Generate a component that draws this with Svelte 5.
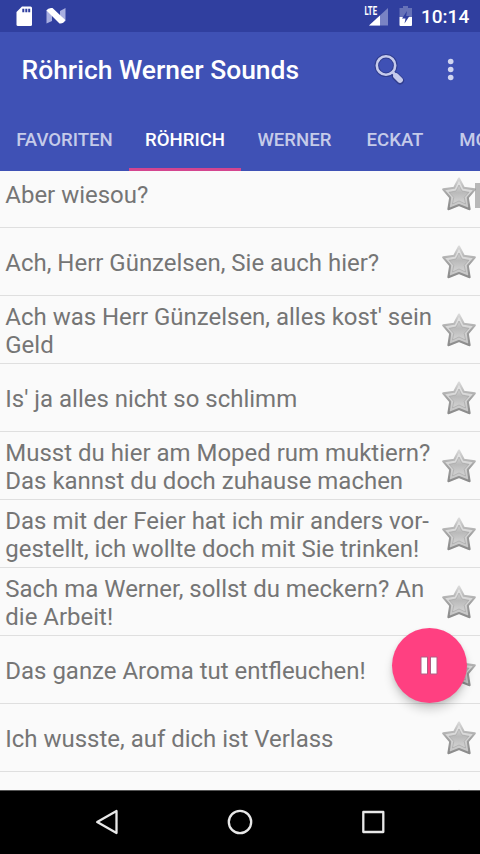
<script>
  const tabs = [
    { label: 'FAVORITEN', width: 129 },
    { label: 'RÖHRICH', width: 112 },
    { label: 'WERNER', width: 107 },
    { label: 'ECKAT', width: 94 },
    { label: 'MOPED', width: 98 }
  ];
  let active = $state('RÖHRICH');
  const sounds = [
    ['Aber wiesou?'],
    ['Ach, Herr Günzelsen, Sie auch hier?'],
    ["Ach was Herr Günzelsen, alles kost' sein", 'Geld'],
    ["Is' ja alles nicht so schlimm"],
    ['Musst du hier am Moped rum muktiern?', 'Das kannst du doch zuhause machen'],
    ['Das mit der Feier hat ich mir anders vor-', 'gestellt, ich wollte doch mit Sie trinken!'],
    ['Sach ma Werner, sollst du meckern? An', 'die Arbeit!'],
    ['Das ganze Aroma tut entfleuchen!'],
    ['Ich wusste, auf dich ist Verlass'],
    []
  ];
</script>

<svg class="defs" width="0" height="0" aria-hidden="true">
  <defs>
    <linearGradient id="starOuter" x1="0" y1="0" x2="0" y2="1">
      <stop offset="0" stop-color="#e6e6e6" />
      <stop offset="1" stop-color="#c4c4c4" />
    </linearGradient>
    <linearGradient id="starInner" x1="0" y1="0" x2="0" y2="1">
      <stop offset="0" stop-color="#d0d0d0" />
      <stop offset="0.4" stop-color="#bababa" />
      <stop offset="1" stop-color="#d4d4d4" />
    </linearGradient>
    <linearGradient id="starEdge" x1="0" y1="0" x2="0" y2="1">
      <stop offset="0" stop-color="#dadada" />
      <stop offset="0.5" stop-color="#a2a2a2" />
      <stop offset="1" stop-color="#8b8b8b" />
    </linearGradient>
  </defs>
</svg>

<div class="screen">
  <div class="status">
    <svg class="sd" width="17" height="21" viewBox="0 0 17 21">
      <path d="M6 0.5H14.5Q16 .5 16 2V18.5Q16 20 14.5 20H2Q.5 20 .5 18.5V6Z" fill="#fff" />
      <path d="M6.3 2.7h2v3.6h-2zM9.3 2.7h2v3.6h-2zM12.2 2.7h2v3.6h-2z" fill="#303f9f" />
    </svg>
    <svg class="nougat" width="20" height="18" viewBox="0 0 20 18">
      <path d="M.5 3 6 1V14L.5 16.500ZM14 4 19.500 1V14L14 16Z" fill="#a7aee0" />
      <path d="M.5 3.500Q2 .5 6.500 1L19.300 13Q17.500 17 13.500 16.500Z" fill="#fff" />
    </svg>
    <span class="grow"></span>
    <svg class="signal" width="25" height="22" viewBox="0 0 25 22">
      <path d="M24 3V20.500H5Z" fill="#7983c4" />
      <path d="M16 10.500V20.500H5Z" fill="#fff" />
      <text x="0.500" y="10.300" textLength="12.500" lengthAdjust="spacingAndGlyphs" class="lte">LTE</text>
    </svg>
    <svg class="battery" width="14" height="22" viewBox="0 0 14 22">
      <path d="M4 0h5v2h4v9H.5V2H4Z" fill="#6672b8" />
      <path d="M.5 11H13v8q0 1-1 1H1.500q-1 0-1-1Z" fill="#fff" />
      <path d="M8 5 3 12.500h3.500L5.500 17.500 10.500 10H7.200Z" fill="#303f9f" />
    </svg>
    <span class="clock">10:14</span>
  </div>

  <header>
    <div class="toolbar">
      <h1>Röhrich Werner Sounds</h1>
      <button class="search" aria-label="Suchen">
        <svg width="32" height="32" viewBox="0 0 32 32" fill="none">
          <path d="M22 22.500 26 26.500" stroke="#303d8e" stroke-width="8" stroke-linecap="round" />
          <circle cx="12" cy="11.500" r="9.200" stroke="#303d8e" stroke-width="4.600" />
          <circle cx="12" cy="11.500" r="9.200" stroke="#c6cbec" stroke-width="2.600" />
          <path d="M18.500 18 22 21.500" stroke="#c6cbec" stroke-width="3" />
          <path d="M22 22 26 26" stroke="#c6cbec" stroke-width="5.800" stroke-linecap="round" />
        </svg>
      </button>
      <button class="more" aria-label="Mehr">
        <svg width="8" height="24" viewBox="0 0 8 24" fill="#d0d5f0">
          <circle cx="3.700" cy="3.500" r="2.800" /><circle cx="3.700" cy="11.500" r="2.800" /><circle cx="3.700" cy="19.500" r="2.800" />
        </svg>
      </button>
    </div>
    <nav>
      {#each tabs as tab}
        <button class="tab" class:active={active === tab.label} style:width="{tab.width}px" onclick={() => (active = tab.label)}>{tab.label}</button>
      {/each}
    </nav>
  </header>

  <main>
    <ul>
      {#each sounds as lines}
        <li>
          <div class="label">
            {#each lines as line}<span>{line}</span>{/each}
          </div>
          <svg class="star" width="38" height="38" viewBox="0 0 38 38" stroke-linejoin="round">
            <path d="M19 3.500 23.800 12.800 34.800 14.400 27.800 22.600 29.600 34.200 19 30 8.400 34.200 10.200 22.600 3.200 14.400 14.200 12.800Z" fill="url(#starOuter)" stroke="url(#starEdge)" stroke-width="2.100" />
            <path d="M19 10 22 16 29 17.300 24.300 22.300 25.500 29 19 26 12.500 29 13.700 22.300 9 17.300 16 16Z" fill="url(#starInner)" stroke="#999" stroke-opacity=".5" />
          </svg>
        </li>
      {/each}
    </ul>
    <div class="thumb"></div>
    <button class="fab" aria-label="Pause">
      <svg width="18" height="19" viewBox="0 0 18 19">
        <path d="M1 1h6.500v17H1zM10.500 1H17v17h-6.500z" fill="#fff" stroke="#b35b82" />
      </svg>
    </button>
  </main>

  <footer>
    <svg width="480" height="63" viewBox="0 0 480 63" fill="none" stroke="#e8e8e8" stroke-width="2.300" stroke-linejoin="round">
      <path d="M116.500 20V42L97.200 31Z" />
      <circle cx="240" cy="31" r="11.200" />
      <rect x="363.300" y="21" width="20" height="20" />
    </svg>
  </footer>
</div>

<style>
  :global(body) { margin: 0; overflow: hidden; }
  .defs { position: absolute; }
  .screen {
    width: 480px; height: 854px; display: flex; flex-direction: column;
    overflow: hidden; background: #fafafa;
    font-family: Roboto, "Liberation Sans", sans-serif;
  }
  button { border: 0; padding: 0; background: none; font: inherit; color: inherit; }
  svg { display: block; flex: none; }
  .status {
    height: 32px; flex: none; box-sizing: border-box; display: flex; align-items: flex-start;
    padding: 6px 11px 0 16px; background: #303f9f; color: #fff;
  }
  .nougat { margin: 1px 0 0 13px; }
  .grow { flex: 1; }
  .signal { margin-right: 10px; margin-top: -1px; }
  .battery { margin-right: 8px; }
  .lte { font-size: 12.500px; font-weight: 700; fill: #fff; }
  .clock { font-size: 19px; font-weight: 500; line-height: 22px; width: 48px; white-space: nowrap; }
  header { height: 139px; flex: none; background: #3f51b5; }
  .toolbar { height: 76px; display: flex; align-items: center; padding: 0 25px 0 21.500px; }
  h1 { margin: 0; flex: 1; font-size: 26.450px; font-weight: 500; line-height: 32px; color: #fff; white-space: nowrap; }
  .search { margin-right: 41px; }
  nav { height: 63px; display: flex; overflow: hidden; }
  .tab {
    flex: none; box-sizing: border-box; height: 63px; padding-top: 3px; border-bottom: 3px solid transparent;
    font-size: 18.600px; font-weight: 500; line-height: 58px; color: #c5cbe9; text-align: center;
  }
  .tab.active { color: #fff; border-color: #d4458f; }
  main { height: 619px; flex: none; position: relative; overflow: hidden; }
  ul { list-style: none; margin: -11.400px 0 0; padding: 0; }
  li {
    height: 68.060px; box-sizing: border-box; border-bottom: 1.500px solid #dfdfdf;
    display: flex; align-items: center; padding: 0 2px 0 5.300px;
  }
  .label { flex: 1; padding-top: 3px; font-size: 23.970px; line-height: 28px; color: #757575; white-space: nowrap; }
  .label span { display: block; }
  .star { margin-top: 1.200px; }
  .thumb { position: absolute; right: 0; top: 12px; width: 5px; height: 25px; background: rgba(130, 130, 130, .55); }
  .fab {
    position: absolute; left: 391.500px; top: 457px; width: 75px; height: 75px; border-radius: 50%;
    display: flex; align-items: center; justify-content: center; background: #ff4081;
    box-shadow: 0 7px 10px rgba(0, 0, 0, .16), 0 2px 4px rgba(0, 0, 0, .1);
  }
  footer { height: 64px; flex: none; box-sizing: border-box; border-top: 1px solid #555; background: #000; }
</style>
